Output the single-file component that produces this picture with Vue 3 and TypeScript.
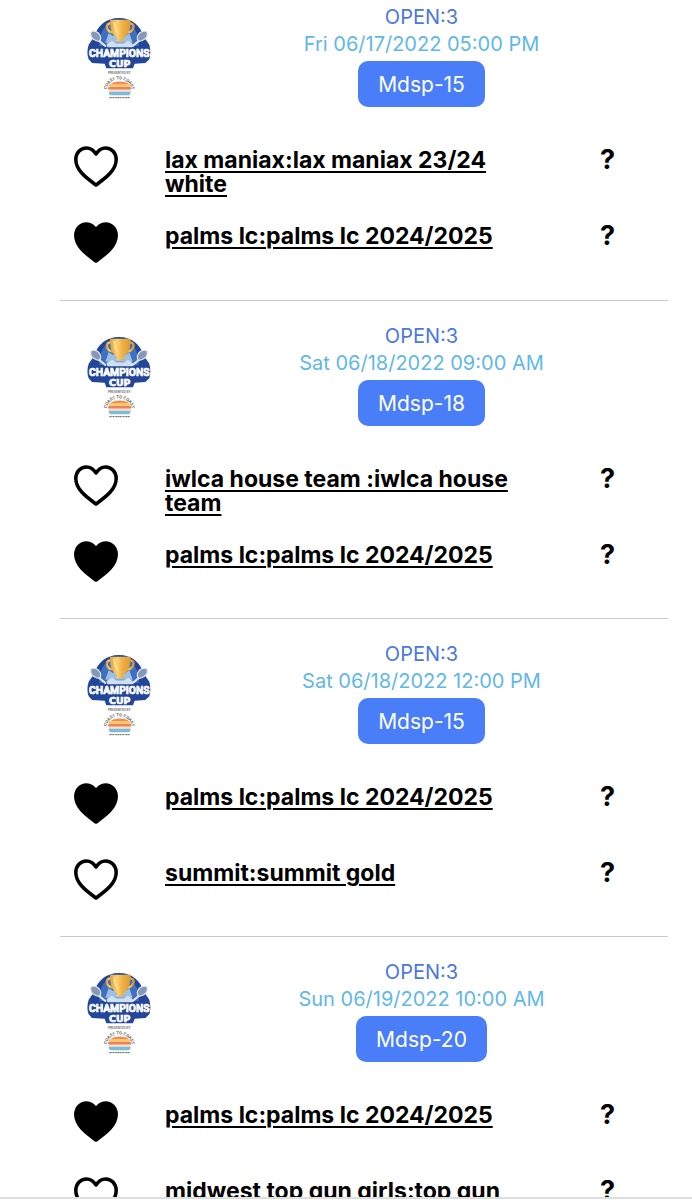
<script setup lang="ts">
import { ref } from 'vue'

interface Team {
  name: string
  favorite: boolean
  score: string
}

interface Game {
  division: string
  time: string
  field: string
  teams: Team[]
}

const games = ref<Game[]>([
  {
    division: 'OPEN:3',
    time: 'Fri 06/17/2022 05:00 PM',
    field: 'Mdsp-15',
    teams: [
      { name: 'lax maniax:lax maniax 23/24 white', favorite: false, score: '?' },
      { name: 'palms lc:palms lc 2024/2025', favorite: true, score: '?' },
    ],
  },
  {
    division: 'OPEN:3',
    time: 'Sat 06/18/2022 09:00 AM',
    field: 'Mdsp-18',
    teams: [
      { name: 'iwlca house team :iwlca house team', favorite: false, score: '?' },
      { name: 'palms lc:palms lc 2024/2025', favorite: true, score: '?' },
    ],
  },
  {
    division: 'OPEN:3',
    time: 'Sat 06/18/2022 12:00 PM',
    field: 'Mdsp-15',
    teams: [
      { name: 'palms lc:palms lc 2024/2025', favorite: true, score: '?' },
      { name: 'summit:summit gold', favorite: false, score: '?' },
    ],
  },
  {
    division: 'OPEN:3',
    time: 'Sun 06/19/2022 10:00 AM',
    field: 'Mdsp-20',
    teams: [
      { name: 'palms lc:palms lc 2024/2025', favorite: true, score: '?' },
      { name: 'midwest top gun girls:top gun', favorite: false, score: '?' },
    ],
  },
])

function toggle(team: Team): void {
  team.favorite = !team.favorite
}
</script>

<template>
  <div class="screen">
    <svg class="sprite" aria-hidden="true">
      <defs>
        <linearGradient id="gold" x1="0" x2="1" y1="0" y2="0">
          <stop offset="0" stop-color="#dfa23c" />
          <stop offset="0.35" stop-color="#fbd070" />
          <stop offset="0.6" stop-color="#efb143" />
          <stop offset="1" stop-color="#d99a36" />
        </linearGradient>
        <path id="coast-arc" d="M110 281 C102 224 192 224 186 281" />
      </defs>
      <symbol id="heart" viewBox="0 0 44 41">
        <path
          d="M22 8 C19.5 4 16 1.9 12.5 1.9 C6.4 1.9 1.8 6.8 1.8 13.5 C1.8 25 14 33 22 39 C30 33 42.2 25 42.2 13.5 C42.2 6.8 37.6 1.9 31.5 1.9 C28 1.9 24.5 4 22 8Z"
          stroke="#000"
          stroke-width="3.5"
          stroke-linejoin="round"
        />
      </symbol>
    </svg>

    <main class="games">
      <article v-for="(game, i) in games" :key="i" class="game">
        <header class="head">
          <svg class="logo" viewBox="45 45 210 258" role="img" aria-label="Champions Cup">
            <path
              d="M147 54 C186 54 212 78 220 108 L238 134 C242 148 242 166 238 178 L226 189 L194 191 L189 205 L109 205 L104 191 L66 189 L56 178 C51 166 51 148 56 134 L74 108 C82 78 108 54 147 54Z"
              fill="#23459a"
            />
            <path d="M88 122 C91 88 115 62 147 62 C179 62 203 88 206 122 L206 138 L88 138Z" fill="#3f6fc0" />
            <path d="M116 100 L106 128 H188 L178 100 L166 108 L147 98 L130 108Z" fill="#9dbfe3" />
            <g stroke="#e9eef6" stroke-width="6" stroke-linecap="round">
              <path d="M84 120 L106 138" />
              <path d="M210 120 L188 138" />
            </g>
            <g fill="#8798b4" stroke="#e3e9f2" stroke-width="4">
              <path d="M62 100 C62 90 78 92 86 100 C93 108 94 118 88 124 C78 124 60 116 62 100Z" />
              <path d="M232 100 C232 90 216 92 208 100 C201 108 200 118 206 124 C216 124 234 116 232 100Z" />
            </g>
            <g fill="none" stroke="url(#gold)" stroke-width="7">
              <path d="M124 70 C103 68 107 96 130 98" />
              <path d="M178 70 C198 68 194 96 170 98" />
            </g>
            <path
              d="M120 59 H182 C182 90 175 105 160 113 L159 118 L166 124 H136 L142 118 L141 113 C126 105 120 90 120 59Z"
              fill="url(#gold)"
            />
            <path d="M133 66 C134 84 138 95 145 102" fill="none" stroke="#ffe3a0" stroke-width="5" />
            <path d="M110 132 L126 122 L138 130 L162 130 L174 122 L188 132 L186 142 H112Z" fill="#cfe1f0" />
            <g class="wordmark" text-anchor="middle">
              <text class="champions" x="148" y="171">CHAMPIONS</text>
              <text class="cup" x="149" y="201">CUP</text>
            </g>
            <text class="small" x="148" y="221" font-size="9" fill="#4b4f58" text-anchor="middle">PRESENTED BY</text>
            <text class="small" font-size="12" fill="#4a4443">
              <textPath href="#coast-arc" startOffset="50%" text-anchor="middle">COAST TO COAST</textPath>
            </text>
            <path d="M121 254 C128 241 170 241 178 254Z" fill="#ef8d5c" />
            <rect x="116" y="253" width="65" height="8" rx="4" fill="#f6ca66" />
            <rect x="114" y="261" width="70" height="8" rx="4" fill="#ee8163" />
            <rect x="115" y="269" width="68" height="6" rx="3" fill="#f8dfca" />
            <path d="M116 275 H182 C182 283 178 286 172 286 H126 C120 286 116 283 116 275Z" fill="#7dbbd6" />
            <path d="M118 293 H180" stroke="#5e6068" stroke-width="3" stroke-dasharray="5 1 3 1" />
          </svg>
          <div class="info">
            <div class="division">{{ game.division }}</div>
            <div class="time">{{ game.time }}</div>
            <button type="button" class="field">{{ game.field }}</button>
          </div>
        </header>
        <div v-for="team in game.teams" :key="team.name" class="team">
          <button
            type="button"
            class="favorite"
            :class="{ on: team.favorite }"
            :aria-pressed="team.favorite"
            :aria-label="'Favorite ' + team.name"
            @click="toggle(team)"
          >
            <svg class="heart"><use href="#heart" /></svg>
          </button>
          <a href="#" class="name" @click.prevent>{{ team.name }}</a>
          <span class="score">{{ team.score }}</span>
        </div>
      </article>
    </main>
    <div class="bottom-bar"></div>
  </div>
</template>

<style>
body {
  background: #fff;
}
</style>

<style scoped>
.screen {
  display: flex;
  flex-direction: column;
  height: 100vh;
  overflow: hidden;
  background: #fff;
  color: #000;
  font-family: Inter, "Liberation Sans", sans-serif;
}

.sprite {
  position: absolute;
  width: 0;
  height: 0;
}

.wordmark {
  fill: #fff;
  stroke: #fff;
  stroke-width: 2px;
}

.champions {
  font-family: Roboto, sans-serif;
  font-size: 31px;
  font-weight: 700;
}

.cup {
  font-family: "DejaVu Sans", sans-serif;
  font-size: 28px;
  font-weight: 700;
}

.small {
  font-family: Inter, sans-serif;
  font-weight: 600;
}

.games {
  flex: 1;
  min-height: 0;
  overflow: hidden;
  padding: 0 24px 0 60px;
}

.game {
  padding: 22px 0 1px;
  border-bottom: 1px solid #c9c9c9;
}

.game:first-child {
  padding: 4px 0 2px;
}

.head {
  display: grid;
  grid-template-columns: 119px 1fr;
  padding-right: 4px;
  margin-bottom: 39px;
}

.logo {
  width: 70px;
  height: 86px;
  margin-top: 11px;
  justify-self: center;
}

.info {
  text-align: center;
  font-size: 20px;
  line-height: 27px;
}

.division {
  color: #4a78e0;
}

.time {
  color: #5fb8e8;
}

.field {
  height: 46px;
  margin-top: 3px;
  padding: 0 20px;
  border: 0;
  border-radius: 10px;
  background: #4a7ef8;
  color: #fff;
  font-family: inherit;
  font-size: 21px;
  line-height: 27px;
  vertical-align: top;
}

.team {
  display: grid;
  grid-template-columns: 91px 1fr 68px;
  align-items: start;
  min-height: 76px;
  padding-left: 14px;
}

.favorite {
  display: block;
  width: 44px;
  height: 41px;
  padding: 0;
  border: 0;
  background: none;
  fill: none;
}

.favorite.on {
  fill: #000;
}

.heart {
  display: block;
  width: 44px;
  height: 41px;
}

.name {
  max-width: 375px;
  margin-top: 2px;
  color: #000;
  font-size: 23px;
  font-weight: 700;
  line-height: 24px;
  text-decoration: underline;
  text-decoration-thickness: 2px;
  text-underline-offset: 3px;
}

.score {
  font-size: 27px;
  font-weight: 700;
  line-height: 28px;
}

.bottom-bar {
  flex: none;
  height: 1px;
  border-top: 2px solid #dedede;
}
</style>
